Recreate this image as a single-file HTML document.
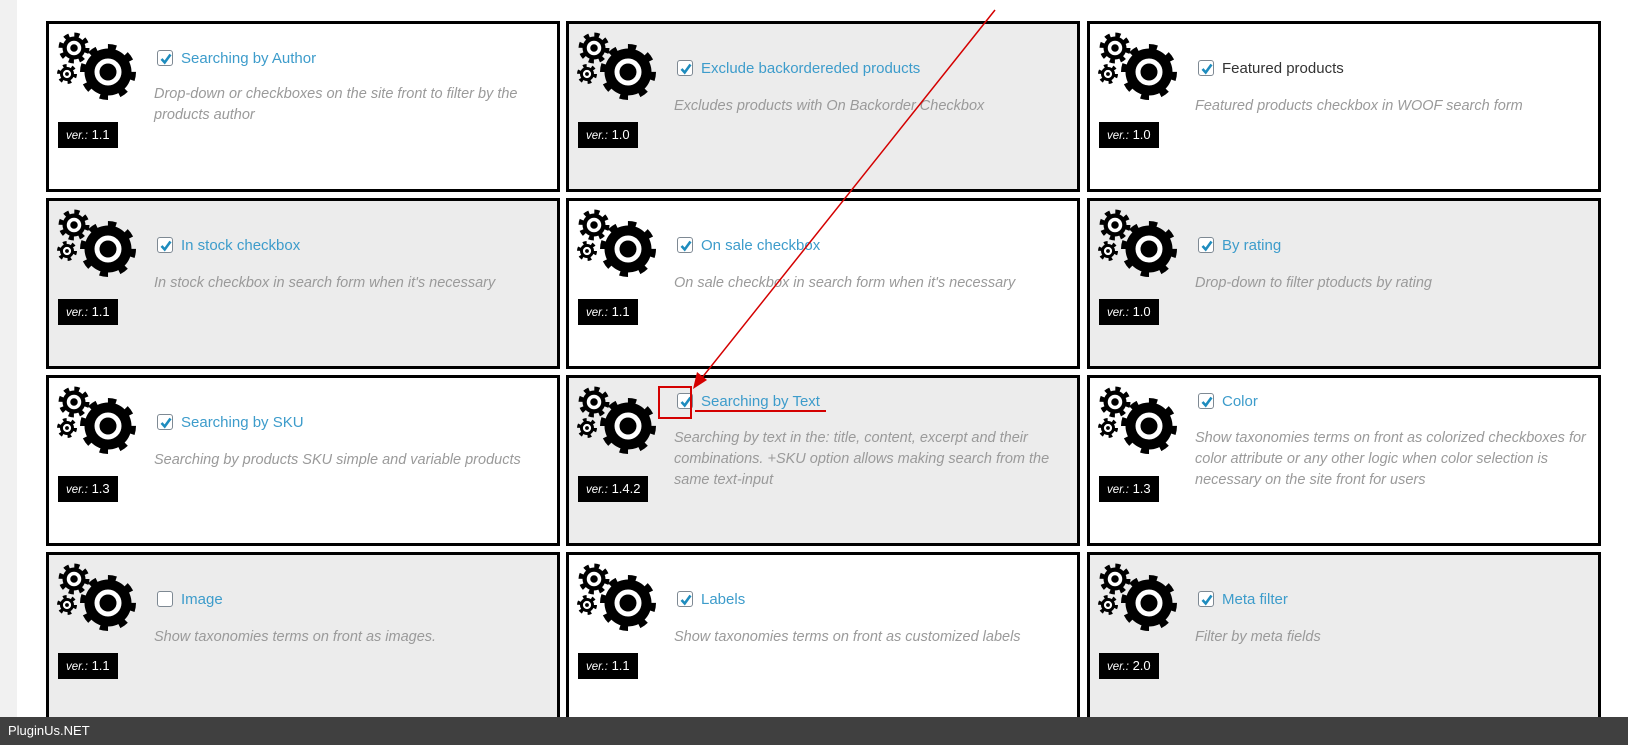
<!DOCTYPE html>
<html><head><meta charset="utf-8"><style>
*{margin:0;padding:0;box-sizing:border-box}
body{width:1628px;height:745px;position:relative;background:#fff;font-family:"Liberation Sans",sans-serif;overflow:hidden}
.strip{position:absolute;left:0;top:0;width:17px;height:745px;background:#f1f1f1}
.box{position:absolute;width:514px;height:171px;border:3px solid #000;background:#fff}
.g{background:#ececec}
.gear{position:absolute;left:8px;top:8px}
.t{position:absolute;left:108px;font-size:15px;color:#3d9ccb;white-space:nowrap;line-height:20px}
.cb{display:inline-block;width:16px;height:16px;border:1px solid #7e8993;border-radius:3px;background:#fff;vertical-align:-3px;margin-right:8px;position:relative}
.cb svg{position:absolute;left:1px;top:1px}
.d{position:absolute;left:105px;width:395px;font-size:14.5px;font-style:italic;color:#9a9a9a;line-height:21px}
.v{position:absolute;left:9px;top:98px;height:26px;background:#000;color:#fff;font-size:13px;line-height:26px;padding:0 8px}
.v i{font-size:11.5px}
.foot{position:absolute;left:0;top:717px;width:1628px;height:28px;background:#404040;color:#fff;font-size:13px;line-height:28px;padding-left:8px}
</style></head><body>
<div class="strip"></div>
<svg width="0" height="0" style="position:absolute"><defs>
<g id="gr">
<circle cx="51" cy="40" r="24.5" fill="none" stroke="#000" stroke-width="7" stroke-dasharray="8 11.2"/>
<circle cx="51" cy="40" r="23.5" fill="#000"/>
<circle cx="51" cy="40" r="11" fill="none" stroke="#fff" stroke-width="5"/>
<circle cx="17" cy="16" r="13" fill="none" stroke="#000" stroke-width="5" stroke-dasharray="5 5.2"/>
<circle cx="17" cy="16" r="11.5" fill="#000"/>
<circle cx="17" cy="16" r="5.5" fill="none" stroke="#fff" stroke-width="3.5"/>
<circle cx="10" cy="42" r="8" fill="none" stroke="#000" stroke-width="4" stroke-dasharray="3.5 4.9"/>
<circle cx="10" cy="42" r="7" fill="#000"/>
<circle cx="10" cy="42" r="3" fill="none" stroke="#fff" stroke-width="2.2"/>
</g>
<g id="ck"><path d="M2.5 7 L5.7 10.5 L11.5 2.5" fill="none" stroke="#1e8cbe" stroke-width="2.6"/></g>
</defs></svg>

<div class="box" style="left:46px;top:21px">
<svg class="gear" width="80" height="72"><use href="#gr"/></svg>
<div class="t" style="top:25px"><span class="cb"><svg width="14" height="14"><use href="#ck"/></svg></span>Searching by Author</div>
<div class="d" style="top:60px">Drop-down or checkboxes on the site front to filter by the products author</div>
<div class="v"><i>ver.:</i> 1.1</div></div>

<div class="box g" style="left:566px;top:21px">
<svg class="gear" width="80" height="72"><use href="#gr"/></svg>
<div class="t" style="top:35px"><span class="cb"><svg width="14" height="14"><use href="#ck"/></svg></span>Exclude backordereded products</div>
<div class="d" style="top:72px">Excludes products with On Backorder Checkbox</div>
<div class="v"><i>ver.:</i> 1.0</div></div>

<div class="box" style="left:1087px;top:21px">
<svg class="gear" width="80" height="72"><use href="#gr"/></svg>
<div class="t" style="top:35px;color:#333"><span class="cb"><svg width="14" height="14"><use href="#ck"/></svg></span>Featured products</div>
<div class="d" style="top:72px">Featured products checkbox in WOOF search form</div>
<div class="v"><i>ver.:</i> 1.0</div></div>

<div class="box g" style="left:46px;top:198px">
<svg class="gear" width="80" height="72"><use href="#gr"/></svg>
<div class="t" style="top:35px"><span class="cb"><svg width="14" height="14"><use href="#ck"/></svg></span>In stock checkbox</div>
<div class="d" style="top:72px">In stock checkbox in search form when it's necessary</div>
<div class="v"><i>ver.:</i> 1.1</div></div>

<div class="box" style="left:566px;top:198px">
<svg class="gear" width="80" height="72"><use href="#gr"/></svg>
<div class="t" style="top:35px"><span class="cb"><svg width="14" height="14"><use href="#ck"/></svg></span>On sale checkbox</div>
<div class="d" style="top:72px">On sale checkbox in search form when it's necessary</div>
<div class="v"><i>ver.:</i> 1.1</div></div>

<div class="box g" style="left:1087px;top:198px">
<svg class="gear" width="80" height="72"><use href="#gr"/></svg>
<div class="t" style="top:35px"><span class="cb"><svg width="14" height="14"><use href="#ck"/></svg></span>By rating</div>
<div class="d" style="top:72px">Drop-down to filter ptoducts by rating</div>
<div class="v"><i>ver.:</i> 1.0</div></div>

<div class="box" style="left:46px;top:375px">
<svg class="gear" width="80" height="72"><use href="#gr"/></svg>
<div class="t" style="top:35px"><span class="cb"><svg width="14" height="14"><use href="#ck"/></svg></span>Searching by SKU</div>
<div class="d" style="top:72px">Searching by products SKU simple and variable products</div>
<div class="v"><i>ver.:</i> 1.3</div></div>

<div class="box g" style="left:566px;top:375px">
<svg class="gear" width="80" height="72"><use href="#gr"/></svg>
<div class="t" style="top:14px"><span class="cb"><svg width="14" height="14"><use href="#ck"/></svg></span>Searching by Text</div>
<div class="d" style="top:50px">Searching by text in the: title, content, excerpt and their combinations. +SKU option allows making search from the same text-input</div>
<div class="v"><i>ver.:</i> 1.4.2</div></div>

<div class="box" style="left:1087px;top:375px">
<svg class="gear" width="80" height="72"><use href="#gr"/></svg>
<div class="t" style="top:14px"><span class="cb"><svg width="14" height="14"><use href="#ck"/></svg></span>Color</div>
<div class="d" style="top:50px">Show taxonomies terms on front as colorized checkboxes for color attribute or any other logic when color selection is necessary on the site front for users</div>
<div class="v"><i>ver.:</i> 1.3</div></div>

<div class="box g" style="left:46px;top:552px">
<svg class="gear" width="80" height="72"><use href="#gr"/></svg>
<div class="t" style="top:35px"><span class="cb"></span>Image</div>
<div class="d" style="top:72px">Show taxonomies terms on front as images.</div>
<div class="v"><i>ver.:</i> 1.1</div></div>

<div class="box" style="left:566px;top:552px">
<svg class="gear" width="80" height="72"><use href="#gr"/></svg>
<div class="t" style="top:35px"><span class="cb"><svg width="14" height="14"><use href="#ck"/></svg></span>Labels</div>
<div class="d" style="top:72px">Show taxonomies terms on front as customized labels</div>
<div class="v"><i>ver.:</i> 1.1</div></div>

<div class="box g" style="left:1087px;top:552px">
<svg class="gear" width="80" height="72"><use href="#gr"/></svg>
<div class="t" style="top:35px"><span class="cb"><svg width="14" height="14"><use href="#ck"/></svg></span>Meta filter</div>
<div class="d" style="top:72px">Filter by meta fields</div>
<div class="v"><i>ver.:</i> 2.0</div></div>

<svg style="position:absolute;left:0;top:0" width="1628" height="745">
<line x1="995" y1="10" x2="697" y2="384" stroke="#d40000" stroke-width="1.5"/>
<polygon points="693,389 697,372 707,380" fill="#d40000"/>
<rect x="659" y="387" width="32" height="31" fill="none" stroke="#d40000" stroke-width="2"/>
<line x1="695" y1="411" x2="826" y2="411" stroke="#d40000" stroke-width="2"/>
</svg>

<div class="foot">PluginUs.NET</div>
</body></html>
